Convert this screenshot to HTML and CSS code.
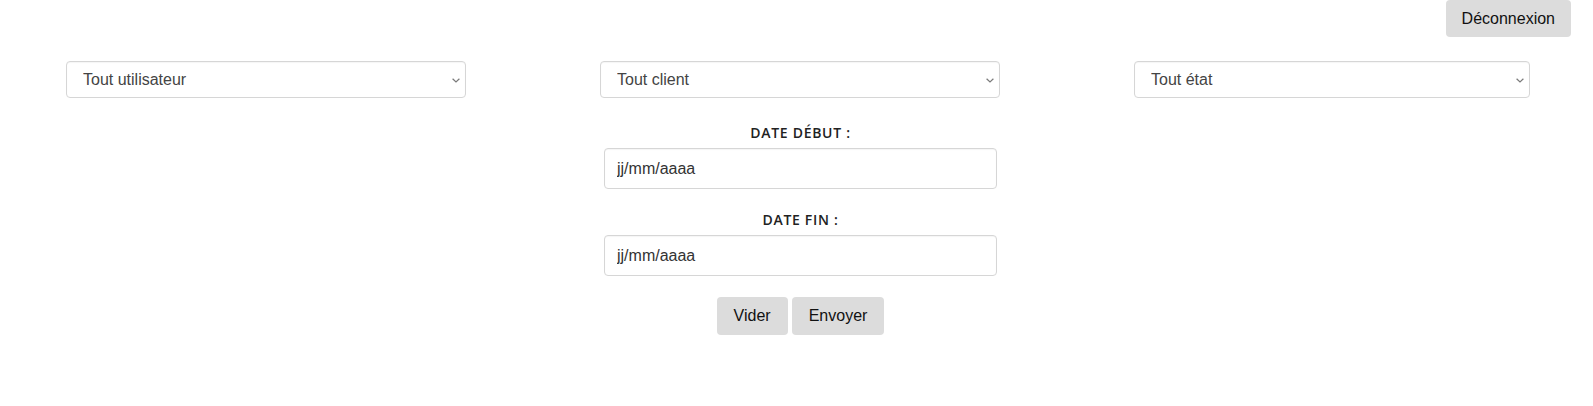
FILE: index.html
```html
<!DOCTYPE html>
<html lang="fr">
<head>
<meta charset="utf-8">
<title>Recherche</title>
<link rel="stylesheet" href="styles.css">
</head>
<body>
<header class="topbar">
  <button class="btn" type="button">Déconnexion</button>
</header>
<div class="filters">
  <div class="select-wrap">
    <select class="field select">
      <option>Tout utilisateur</option>
    </select>
    <svg class="chevron" width="8" height="5" viewBox="0 0 8 5" aria-hidden="true"><path d="M0.6 0.7 L4 4 L7.4 0.7" fill="none" stroke="#7a7a7a" stroke-width="1.2"/></svg>
  </div>
  <div class="select-wrap">
    <select class="field select">
      <option>Tout client</option>
    </select>
    <svg class="chevron" width="8" height="5" viewBox="0 0 8 5" aria-hidden="true"><path d="M0.6 0.7 L4 4 L7.4 0.7" fill="none" stroke="#7a7a7a" stroke-width="1.2"/></svg>
  </div>
  <div class="select-wrap">
    <select class="field select">
      <option>Tout état</option>
    </select>
    <svg class="chevron" width="8" height="5" viewBox="0 0 8 5" aria-hidden="true"><path d="M0.6 0.7 L4 4 L7.4 0.7" fill="none" stroke="#7a7a7a" stroke-width="1.2"/></svg>
  </div>
</div>
<form class="dates">
  <label class="label label-first" for="debut">DATE DÉBUT :</label>
  <input class="field input" id="debut" type="text" placeholder="jj/mm/aaaa">
  <label class="label" for="fin">DATE FIN :</label>
  <input class="field input" id="fin" type="text" placeholder="jj/mm/aaaa">
  <div class="actions">
    <button class="btn" type="reset">Vider</button>
    <button class="btn" type="submit">Envoyer</button>
  </div>
</form>
</body>
</html>
```

FILE: styles.css
```css
html, body {
  margin: 0;
  padding: 0;
  background: #fff;
}
body {
  font-family: "Liberation Sans", Arial, sans-serif;
  font-size: 16px;
  color: #222;
}
.topbar {
  display: flex;
  justify-content: flex-end;
  padding-right: 22px;
  height: 36px;
}
.btn {
  font-family: "Liberation Sans", Arial, sans-serif;
  font-size: 16px;
  color: #111;
  background: #dcdcdc;
  border: none;
  border-radius: 4px;
  height: 37px;
  padding: 0 16px;
  cursor: pointer;
}
.filters {
  display: grid;
  grid-template-columns: 400px 400px 396px;
  column-gap: 134px;
  padding-left: 66px;
  margin-top: 25px;
}
.select-wrap {
  position: relative;
}
.chevron {
  position: absolute;
  right: 6px;
  top: 17px;
  pointer-events: none;
}
.field {
  box-sizing: border-box;
  font-family: "Liberation Sans", Arial, sans-serif;
  font-size: 16px;
  color: #444;
  background: #fff;
  border: 1px solid #d6d6d6;
  border-radius: 4px;
  box-shadow: inset 0 1px 1px rgba(0, 0, 0, 0.04);
}
.select {
  -webkit-appearance: none;
  appearance: none;
  width: 100%;
  height: 37px;
  padding: 0 24px 0 16px;
  outline: none;
}
.dates {
  display: flex;
  flex-direction: column;
  align-items: center;
  padding-left: 8px;
  margin: 0;
}
.label {
  font-family: "Open Sans", Lato, sans-serif;
  font-weight: 600;
  font-size: 14px;
  line-height: 17px;
  letter-spacing: 0.7px;
  color: #222;
  margin-top: 22px;
  margin-bottom: 7px;
}
.label-first {
  margin-top: 26px;
}
.input {
  width: 393px;
  height: 41px;
  padding: 0 12px;
  color: #333;
}
.input::placeholder {
  color: #333;
  opacity: 1;
}
.actions {
  display: flex;
  gap: 4px;
  margin-top: 21px;
}
.actions .btn {
  height: 38px;
  padding: 0 17px;
}
```
